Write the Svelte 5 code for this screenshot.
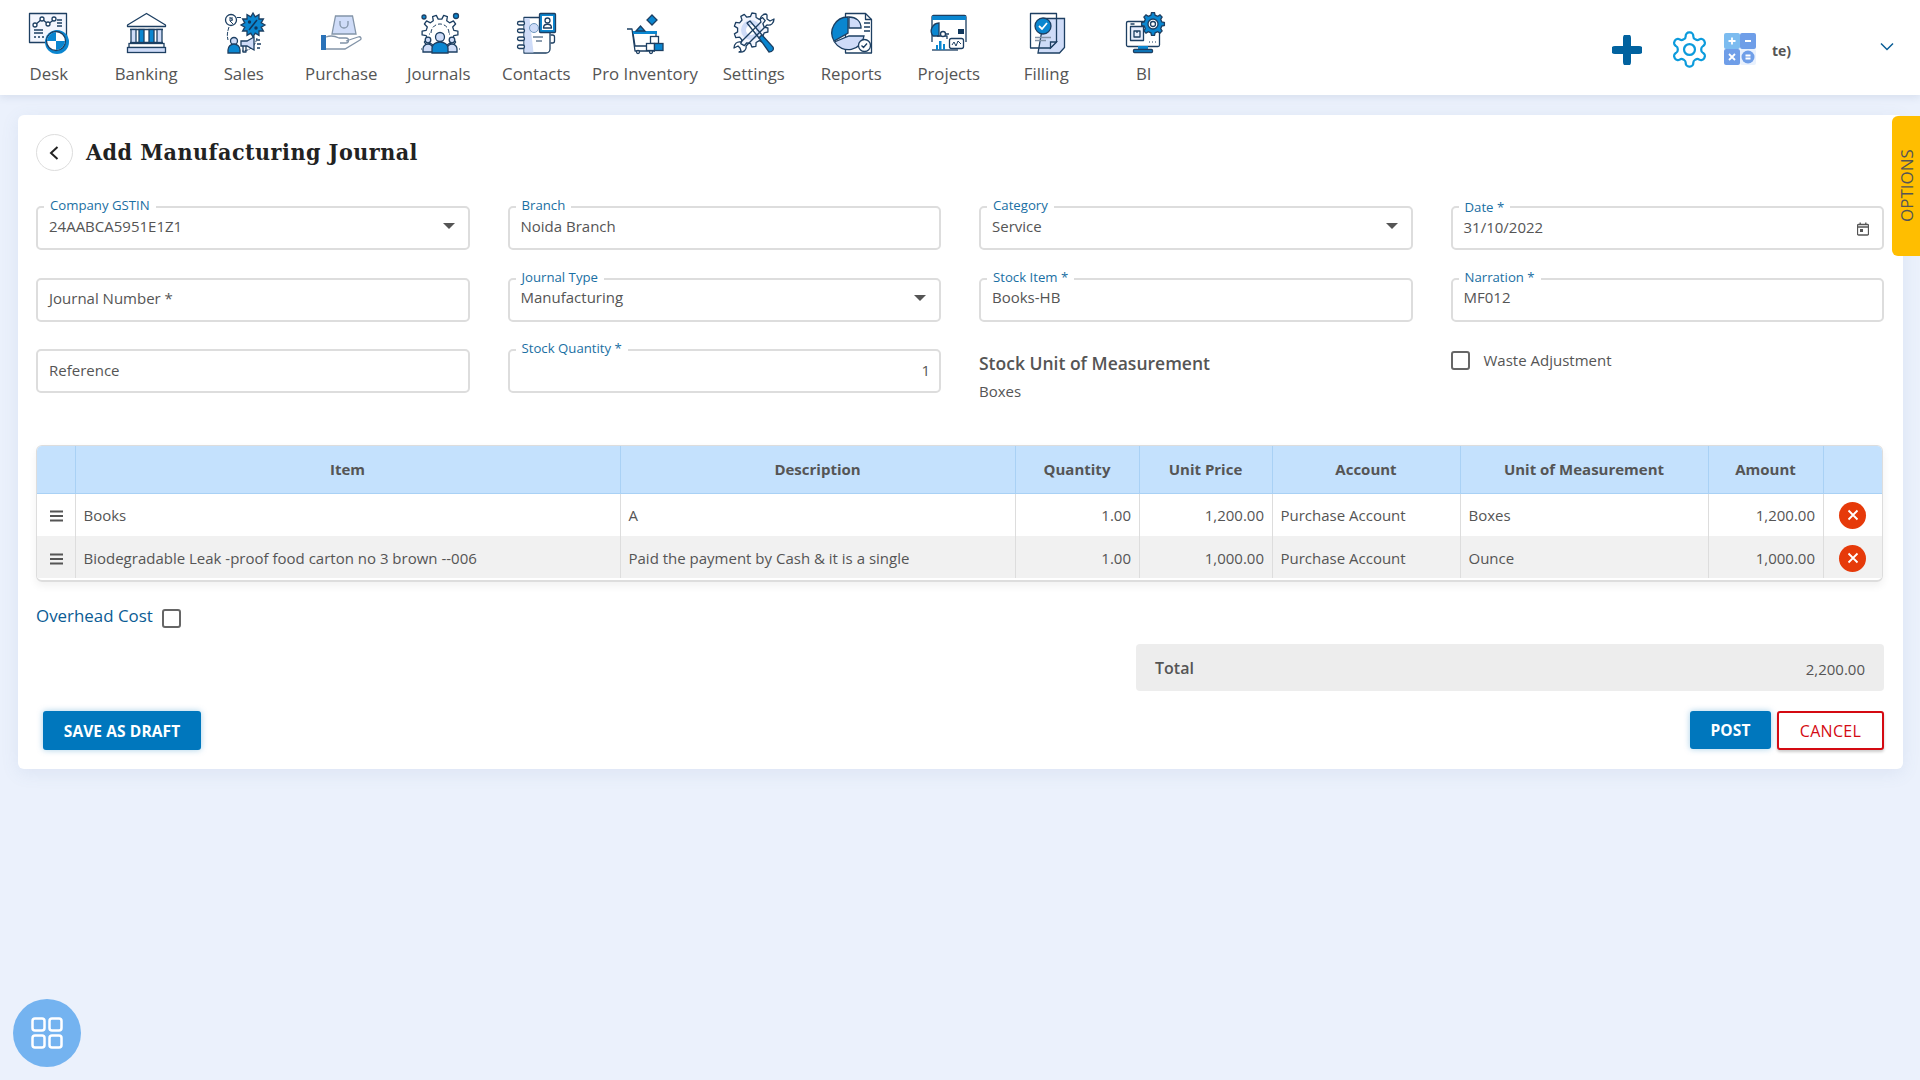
<script>
	const navItems = [
		{ key: 'desk', label: 'Desk' },
		{ key: 'banking', label: 'Banking' },
		{ key: 'sales', label: 'Sales' },
		{ key: 'purchase', label: 'Purchase' },
		{ key: 'journals', label: 'Journals' },
		{ key: 'contacts', label: 'Contacts' },
		{ key: 'inventory', label: 'Pro Inventory', wide: true },
		{ key: 'settings', label: 'Settings' },
		{ key: 'reports', label: 'Reports' },
		{ key: 'projects', label: 'Projects' },
		{ key: 'filling', label: 'Filling' },
		{ key: 'bi', label: 'BI' }
	];

	const columns = [
		{ label: '', width: 38 },
		{ label: 'Item', width: 545 },
		{ label: 'Description', width: 395 },
		{ label: 'Quantity', width: 124 },
		{ label: 'Unit Price', width: 133 },
		{ label: 'Account', width: 188 },
		{ label: 'Unit of Measurement', width: 248 },
		{ label: 'Amount', width: 115 },
		{ label: '', width: 59 }
	];

	const rows = [
		{ item: 'Books', desc: 'A', qty: '1.00', price: '1,200.00', account: 'Purchase Account', unit: 'Boxes', amount: '1,200.00' },
		{ item: 'Biodegradable Leak -proof food carton no 3 brown --006', desc: 'Paid the payment by Cash & it is a single', qty: '1.00', price: '1,000.00', account: 'Purchase Account', unit: 'Ounce', amount: '1,000.00' }
	];

	// outline of a cog with square-ish teeth
	function gear(cx, cy, outer, inner, teeth) {
		const pts = [];
		const step = (Math.PI * 2) / teeth;
		for (let i = 0; i < teeth; i++) {
			const a = i * step;
			[[-0.3, inner], [-0.17, outer], [0.17, outer], [0.3, inner]].forEach(([t, r]) => {
				pts.push(`${(cx + r * Math.cos(a + t * step)).toFixed(1)},${(cy + r * Math.sin(a + t * step)).toFixed(1)}`);
			});
		}
		return pts.join(' ');
	}

	function burst(cx, cy, outer, inner, spikes) {
		const pts = [];
		for (let i = 0; i < spikes * 2; i++) {
			const r = i % 2 ? inner : outer;
			const a = (i * Math.PI) / spikes;
			pts.push(`${(cx + r * Math.cos(a)).toFixed(1)},${(cy + r * Math.sin(a)).toFixed(1)}`);
		}
		return pts.join(' ');
	}
</script>

{#snippet field(label, value, opts = {})}
	<div class="field" class:date={opts.date}>
		{#if label}<span class="float-label">{label}</span>{/if}
		<span class="value" class:placeholder={opts.placeholder} class:right={opts.right}>{value}</span>
		{#if opts.select}<span class="caret"></span>{/if}
		{#if opts.date}
			<svg class="cal" viewBox="0 0 12 14" width="12" height="14">
				<path d="M1.5 2.5h9a1 1 0 0 1 1 1v8.5a1 1 0 0 1-1 1h-9a1 1 0 0 1-1-1V3.500a1 1 0 0 1 1-1z" fill="none" stroke="#555" stroke-width="1.300" />
				<path d="M3.200 .6v2.500M8.800 .6v2.500M.8 5h10.400" stroke="#555" stroke-width="1.300" />
				<rect x="3" y="7" width="3" height="3" fill="#555" />
			</svg>
		{/if}
	</div>
{/snippet}

{#snippet navIcon(key)}
	<svg class="nav-icon" viewBox="0 0 48 48" width="48" height="48">
		{#if key === 'desk'}
			<rect class="ln" x="4.500" y="4.500" width="37" height="29" fill="#f3f6fe" />
			<polyline class="ln" points="10,16 17,10 23,15 30,10" />
			<circle class="ln w" cx="10" cy="16" r="2" /><circle class="ln w" cx="17" cy="10" r="2" /><circle class="ln w" cx="23" cy="15" r="2" /><circle class="ln w" cx="29" cy="10" r="2" />
			<path class="ln" d="M32 11h5M32 14h5M32 17h5M9 21h9M9 24h9M9 28h2M13 28h2M17 28h2" />
			<circle class="bl" cx="32" cy="33" r="12" />
			<circle class="ln w" cx="31" cy="32" r="9.500" />
			<path class="bl" d="M31 32V23a9 9 0 0 0-9 9zM31 32v9a9 9 0 0 0 9-9z" />
		{:else if key === 'banking'}
			<path class="ln" d="M24.500 4.500 5.500 16v1.500h38V16z" fill="#f3f6fe" />
			<path class="ln" d="M8 20.500h33M8 33.500h33" />
			<rect class="lt ln" x="9" y="20.500" width="5" height="13" />
			<rect class="bl ln" x="17" y="20.500" width="5" height="13" />
			<rect class="bl ln" x="27" y="20.500" width="5" height="13" />
			<rect class="lt ln" x="35" y="20.500" width="5" height="13" />
			<rect class="ln w" x="7" y="34.500" width="35" height="4" />
			<rect class="lt ln" x="5.500" y="38.500" width="38" height="5" />
		{:else if key === 'sales'}
			<path class="ln thin" d="M17 8.500h5M9 18c-2 6-2 9-1 13M37 29c-2 9-8 13-15 13" stroke-dasharray="4 1" />
			<circle class="ln w" cx="11" cy="11" r="5.500" />
			<path class="ln thin" d="M9 9h4M9 11h4M10 9c3 0 3 3 0 3l3 3" />
			<polygon class="bl ln" points={burst(33, 16, 12, 8.500, 12)} />
			<path d="M29 21l8-10" stroke="#10375c" stroke-width="1.500" />
			<circle cx="29.500" cy="13" r="1.700" fill="#10375c" /><circle cx="36" cy="19" r="1.700" fill="#10375c" />
			<circle class="lt ln" cx="14" cy="32" r="3.500" />
			<path class="bl ln" d="M8 44v-3a6 6 0 0 1 12 0v3z" />
			<path class="lt ln" d="M21 32h6l7-4v13l-7-4h-6z" />
			<path class="ln" d="M23 37v6h3v-6M37 31h3M37 35h4M37 39h3" />
		{:else if key === 'purchase'}
			<path class="lt gr" d="M18.500 7h17l3.500 18H15z" />
			<path class="gr" fill="none" d="M23 12v3a4 4 0 0 0 8 0v-3" stroke-width="2" />
			<rect x="4" y="26" width="5" height="15" fill="#2a72b8" />
			<path class="gr" fill="none" d="M9 28c5-2 9-1 13 1h7a2.500 2.500 0 0 1 0 5h-6M29 32l12-4c3-1 4 2 2 3L28 40H9" />
		{:else if key === 'journals'}
			<polygon class="ln" fill="none" points={gear(25, 24, 18, 14, 10)} />
			<path class="ln thin" d="M16 24a9 9 0 0 1 18 0" stroke-dasharray="4 2" />
			<circle class="bl ln" cx="9" cy="8" r="2" /><circle class="bl ln" cx="41" cy="7" r="2.500" />
			<circle class="lt ln" cx="13" cy="31" r="2.800" /><circle class="lt ln" cx="37" cy="31" r="2.800" />
			<path class="lt ln" d="M8 43v-3a5 5 0 0 1 10 0v3zM32 43v-3a5 5 0 0 1 10 0v3z" />
			<circle class="lt ln" cx="25" cy="28" r="4.500" />
			<path class="bl ln" d="M17 44v-5a8 6 0 0 1 16 0v5z" />
			<path class="ln thin" d="M6 40h1M44 40h1M14 25h1M34 25h1" />
		{:else if key === 'contacts'}
			<path class="ln" fill="#f3f6fe" d="M12 8.500h22a4 4 0 0 1 4 4V40a4 4 0 0 1-4 4H12z" />
			<path class="lt" d="M12.500 9h5l4 34.500h-9z" />
			<path class="ln" d="M38.500 26h2a2 2 0 0 1 2 2v4a2 2 0 0 1-2 2h-2" />
			<rect class="bl ln" x="27.500" y="4.500" width="16" height="19" rx="1" />
			<rect class="w" x="30" y="7" width="11" height="14" />
			<circle class="ln" cx="35.500" cy="11.500" r="2.500" fill="#fff" />
			<path class="ln" d="M31.500 19c0-5 8-5 8 0z" fill="#d8e3fa" />
			<circle class="lt" cx="22" cy="19" r="4.500" stroke="#6f97bd" stroke-width="1" />
			<path class="ln thin" d="M21 28h10M24 32h6" />
			<rect class="ln w" x="5.500" y="12.500" width="7" height="3.500" rx="1.700" /><rect class="ln w" x="5.500" y="20" width="7" height="3.500" rx="1.700" /><rect class="ln w" x="5.500" y="28" width="7" height="3.500" rx="1.700" /><rect class="ln w" x="5.500" y="36" width="7" height="3.500" rx="1.700" />
		{:else if key === 'inventory'}
			<path class="ln" fill="none" d="M6 20h5l3 22h20" />
			<path class="ln" fill="#e6edfc" d="M12 24h23v13H14z" />
			<rect class="bl" x="12" y="22" width="24" height="3" />
			<path class="bl ln" d="M15 22l4.500-5 4.500 5z" />
			<path class="bl ln" d="M31 6l5 5-5 5-5-5z" />
			<circle class="ln w" cx="17" cy="43" r="1.500" /><circle class="ln w" cx="30" cy="43" r="1.500" />
			<rect class="ln w" x="29.500" y="27.500" width="8" height="7" />
			<rect class="ln w" x="25.500" y="34.500" width="8" height="7" />
			<rect class="bl ln" x="33.500" y="34.500" width="8.500" height="7" />
		{:else if key === 'settings'}
			<polygon class="ln" fill="#f3f6fe" points={gear(21, 21, 17, 13.500, 9)} />
			<circle class="lt" cx="21" cy="21" r="10" />
			<circle class="w" cx="21" cy="21" r="5" />
			<path class="ln" fill="#fff" d="M36 5c-4 0-7 4-5 8L11 33c-4-1-7 2-7 6l4-2 2 2 1 3-2 1c4 1 8-2 7-6l21-21c4 1 7-2 7-6l-4 2-3-2v-4z" />
			<path class="ln" fill="#fff" d="M17 14l3-2 12 14-3 3z" />
			<path class="bl ln" d="M29 29l3-3 11 12c1 2 0 5-4 5z" />
		{:else if key === 'reports'}
			<path class="ln" fill="#f3f6fe" d="M18.500 4.500h20l6 6v33.500h-26z" />
			<path class="ln" d="M38.500 4.500v6h6" />
			<path class="lt ln" d="M22 8c7 0 12 4 12 11H22z" />
			<path class="bl ln" d="M21 8a16 16 0 0 0-14 24l14-8z" />
			<path class="lt ln" d="M7.500 33A16 16 0 0 0 37 27H22z" />
			<path class="ln" stroke-width="1.800" d="M37 14h6M37 18h6M37 22h6" />
			<circle class="ln w" cx="37.500" cy="36.500" r="6" />
			<path class="ln" d="M34.500 36.500l2 2 3.500-4" />
		{:else if key === 'projects'}
			<path class="ln" stroke="#5f7d9b" fill="none" d="M7 33V8a1.500 1.500 0 0 1 1.500-1.500h31A1.500 1.500 0 0 1 41 8v25" />
			<rect class="bl" x="7" y="7" width="34" height="4" />
			<path class="bl ln" d="M14 14a8 8 0 0 0-6 13h6z" />
			<path class="ln" d="M12 27h10v3M19 25h5" />
			<circle class="ln w" cx="18" cy="25" r="2.500" />
			<rect x="33" y="20" width="6" height="5" fill="#10375c" />
			<path class="ln" d="M7 41h26" />
			<rect class="bl" x="11" y="36" width="2" height="5" /><rect class="bl" x="14" y="32" width="2.500" height="9" /><rect class="bl" x="18" y="35" width="2" height="6" />
			<rect class="ln w" stroke="#5f7d9b" x="24.500" y="29.500" width="14" height="10" rx="2" />
			<polyline class="ln thin" points="27,36 29,33 31,37 33,32 36,35" />
		{:else if key === 'filling'}
			<path class="lt ln" d="M22 9.500h20.500v29l-5 5.500H16z" />
			<path class="ln" fill="#fff" d="M8.500 4.500h26V33l-6 6h-20z" />
			<path class="lt ln" d="M34.500 33h-6v6z" />
			<circle class="bl ln" cx="21" cy="17" r="8" />
			<path d="M17 17l3 3 5-6" fill="none" stroke="#fff" stroke-width="1.800" />
			<path class="gr" stroke-width="1.500" d="M13 28.500h16M13 31.500h11" />
		{:else if key === 'bi'}
			<rect class="ln w" x="6.500" y="12.500" width="33" height="25" rx="1.500" />
			<rect class="ln" fill="#e6edfc" x="10.500" y="17.500" width="13" height="14" />
			<path class="ln" d="M10.500 15h4M14 22h6v6h-6zM17 22v2" />
			<path class="ln thin" d="M29 33h1M32 33h1M35 33h1" />
			<rect class="bl" x="18" y="37" width="10" height="4" />
			<rect class="bl ln" x="13.500" y="40.500" width="19" height="3" rx="1" />
			<polygon class="bl ln" points={gear(33, 15, 11.500, 9, 8)} />
			<circle class="ln w" cx="33" cy="15" r="5" />
			<circle class="ln w" cx="33" cy="15" r="2.500" />
		{/if}
	</svg>
{/snippet}

<div class="page">
	<header class="topbar">
		<nav class="nav">
			{#each navItems as n}
				<div class="nav-item" class:wide={n.wide}>
					{@render navIcon(n.key)}
					<span class="nav-label">{n.label}</span>
				</div>
			{/each}
		</nav>
		<div class="tools">
			<svg class="plus" viewBox="0 0 30 30" width="30" height="30">
				<path d="M15 3v24M3 15h24" stroke="#01629f" stroke-width="8" stroke-linecap="round" />
			</svg>
			<svg class="cog" viewBox="0 0 24 24" width="41" height="41" fill="none" stroke="#0c9bdc" stroke-width="1.300">
				<path d="M12.220 2h-.44a2 2 0 0 0-2 2v.18a2 2 0 0 1-1 1.730l-.43.25a2 2 0 0 1-2 0l-.15-.08a2 2 0 0 0-2.730.73l-.22.38a2 2 0 0 0 .73 2.730l.15.1a2 2 0 0 1 1 1.720v.51a2 2 0 0 1-1 1.740l-.15.09a2 2 0 0 0-.73 2.730l.22.38a2 2 0 0 0 2.730.73l.15-.08a2 2 0 0 1 2 0l.43.25a2 2 0 0 1 1 1.730V20a2 2 0 0 0 2 2h.44a2 2 0 0 0 2-2v-.18a2 2 0 0 1 1-1.730l.43-.25a2 2 0 0 1 2 0l.15.08a2 2 0 0 0 2.730-.73l.22-.39a2 2 0 0 0-.73-2.730l-.15-.08a2 2 0 0 1-1-1.740v-.5a2 2 0 0 1 1-1.740l.15-.09a2 2 0 0 0 .73-2.730l-.22-.38a2 2 0 0 0-2.730-.73l-.15.08a2 2 0 0 1-2 0l-.43-.25a2 2 0 0 1-1-1.730V4a2 2 0 0 0-2-2z" />
				<circle cx="12" cy="12" r="3.200" />
			</svg>
			<svg class="calc" viewBox="0 0 32 32" width="32" height="32">
				<rect x="0" y="0" width="16" height="16" rx="2" fill="#7cbcf0" />
				<rect x="16" y="0" width="16" height="16" rx="2" fill="#6f9ee8" />
				<rect x="0" y="16" width="16" height="16" rx="2" fill="#6f9ee8" />
				<rect x="16" y="16" width="16" height="16" rx="2" fill="#e9f1fd" />
				<circle cx="24" cy="24" r="6.500" fill="#6f9ee8" />
				<path d="M8 4.500v7M4.500 8h7M21 8h6M5 21l6 6M11 21l-6 6M21.500 22.500h5M21.500 25.500h5" stroke="#fff" stroke-width="1.800" />
			</svg>
			<span class="user">te)</span>
			<svg class="chev" viewBox="0 0 14 9" width="14" height="9">
				<path d="M1 1.500l6 6 6-6" fill="none" stroke="#0a5d96" stroke-width="1.500" />
			</svg>
		</div>
	</header>

	<main class="main">
		<section class="card">
			<div class="title-row">
				<div class="back">
					<svg viewBox="0 0 12 16" width="12" height="16"><path d="M9.500 2 3 8l6.500 6" fill="none" stroke="#222" stroke-width="2" /></svg>
				</div>
				<h1>Add Manufacturing Journal</h1>
			</div>

			<div class="form">
				{@render field('Company GSTIN', '24AABCA5951E1Z1', { select: true })}
				{@render field('Branch', 'Noida Branch')}
				{@render field('Category', 'Service', { select: true })}
				{@render field('Date *', '31/10/2022', { date: true })}
				{@render field('', 'Journal Number *', { placeholder: true })}
				{@render field('Journal Type', 'Manufacturing', { select: true })}
				{@render field('Stock Item *', 'Books-HB')}
				{@render field('Narration *', 'MF012')}
				{@render field('', 'Reference', { placeholder: true })}
				{@render field('Stock Quantity *', '1', { right: true })}
				<div class="uom">
					<div class="uom-title">Stock Unit of Measurement</div>
					<div class="uom-value">Boxes</div>
				</div>
				<div class="waste">
					<span class="check"></span>
					<span>Waste Adjustment</span>
				</div>
			</div>

			<div class="table-wrap">
				<table>
					<colgroup>
						{#each columns as c}<col style="width:{c.width}px" />{/each}
					</colgroup>
					<thead>
						<tr>
							{#each columns as c}<th>{c.label}</th>{/each}
						</tr>
					</thead>
					<tbody>
						{#each rows as r}
							<tr>
								<td class="handle">
									<svg viewBox="0 0 13 12" width="13" height="12"><path d="M0 1.500h13M0 6h13M0 10.500h13" stroke="#555" stroke-width="2" /></svg>
								</td>
								<td>{r.item}</td>
								<td>{r.desc}</td>
								<td class="num">{r.qty}</td>
								<td class="num">{r.price}</td>
								<td>{r.account}</td>
								<td>{r.unit}</td>
								<td class="num">{r.amount}</td>
								<td class="del-cell">
									<span class="del">
										<svg viewBox="0 0 12 12" width="12" height="12"><path d="M1.500 1.500l9 9M10.500 1.500l-9 9" stroke="#fff" stroke-width="1.800" /></svg>
									</span>
								</td>
							</tr>
						{/each}
					</tbody>
				</table>
			</div>

			<div class="overhead">
				<span>Overhead Cost</span>
				<span class="check"></span>
			</div>

			<div class="total">
				<span class="total-label">Total</span>
				<span class="total-value">2,200.00</span>
			</div>

			<div class="actions">
				<button class="btn primary draft">SAVE AS DRAFT</button>
				<div class="actions-right">
					<button class="btn primary post">POST</button>
					<button class="btn cancel">CANCEL</button>
				</div>
			</div>
		</section>
	</main>

	<div class="options">OPTIONS</div>

	<div class="fab">
		<svg viewBox="0 0 32 32" width="32" height="32" fill="none" stroke="#fff" stroke-width="2.500">
			<rect x="1.500" y="1.500" width="12" height="12" rx="2.500" />
			<rect x="18.500" y="1.500" width="12" height="12" rx="2.500" />
			<rect x="1.500" y="18.500" width="12" height="12" rx="2.500" />
			<rect x="18.500" y="18.500" width="12" height="12" rx="2.500" />
		</svg>
	</div>
</div>

<style>
	:global(body) {
		margin: 0;
		background: #ebf1fc;
		font-family: "Open Sans", "Noto Sans", sans-serif;
		color: #555;
	}
	.page {
		min-height: 1080px;
		position: relative;
		overflow: hidden;
	}

	.topbar {
		height: 95px;
		background: #fff;
		display: flex;
		justify-content: space-between;
		box-shadow: 0 2px 8px rgba(60, 80, 120, 0.12);
	}
	.nav {
		display: flex;
	}
	.nav-item {
		width: 97.5px;
		display: flex;
		flex-direction: column;
		align-items: center;
		padding-top: 9px;
	}
	.nav-item.wide {
		width: 120px;
	}
	.nav-label {
		font-size: 16.800px;
		font-weight: 500;
		line-height: 22px;
		margin-top: 6px;
		white-space: nowrap;
		color: #555;
	}
	.nav-icon .ln {
		stroke: #1d3f62;
		stroke-width: 1.300;
	}
	.nav-icon .thin {
		stroke-width: 1;
		fill: none;
	}
	.nav-icon .ln:not(.lt):not(.bl):not(.w) {
		stroke-linejoin: round;
	}
	.nav-icon .gr {
		stroke: #8394a8;
		stroke-width: 1.300;
	}
	.nav-icon .lt {
		fill: #cfdcf8;
	}
	.nav-icon .bl {
		fill: #0a86d0;
	}
	.nav-icon .w {
		fill: #fff;
	}
	polyline.ln,
	path.ln {
		fill: none;
	}
	path.ln.bl {
		fill: #0a86d0;
	}
	path.ln.lt {
		fill: #cfdcf8;
	}

	.tools {
		display: flex;
		align-items: center;
		padding-right: 26px;
	}
	.plus {
		margin-right: 26.500px;
		margin-top: 4px;
	}
	.cog {
		margin-right: 14.500px;
		margin-top: 3px;
	}
	.calc {
		margin-right: 16px;
		margin-top: 2px;
	}
	.user {
		font-size: 14px;
		font-weight: 700;
		width: 108px;
		margin-top: 6px;
	}
	.chev {
		margin-top: -3px;
	}

	.main {
		padding: 20px 17px 0 18px;
	}
	.card {
		background: #fff;
		border-radius: 6px;
		padding: 19px 19px 19px 18px;
		box-shadow: 0 4px 18px rgba(90, 120, 170, 0.1);
	}
	.title-row {
		display: flex;
		align-items: center;
		gap: 13px;
		margin-bottom: 35px;
	}
	.back {
		width: 37px;
		height: 37px;
		box-sizing: border-box;
		border: 1px solid #ddd;
		border-radius: 50%;
		display: flex;
		align-items: center;
		justify-content: center;
		padding-right: 2px;
	}
	h1 {
		margin: -2px 0 0;
		font-family: "DejaVu Serif Condensed", "DejaVu Serif", serif;
		font-size: 23px;
		font-weight: 700;
		color: #222;
		letter-spacing: 0.500px;
	}

	.form {
		display: grid;
		grid-template-columns: repeat(4, 433.500px);
		column-gap: 38px;
		grid-auto-rows: 44px;
		row-gap: 27.500px;
	}
	.field {
		position: relative;
		box-sizing: border-box;
		border: 2px solid #ddd;
		border-radius: 5px;
		display: flex;
		align-items: center;
		padding: 0 11px;
		height: 44px;
		font-size: 15px;
		color: #555;
	}
	.float-label {
		position: absolute;
		left: 6px;
		top: -11px;
		padding: 0 6px;
		background: #fff;
		font-size: 13.200px;
		line-height: 16px;
		color: #1a6fa3;
		white-space: nowrap;
	}
	.value {
		flex: 1;
		margin-top: -5px;
	}
	.value.placeholder {
		margin-top: -3px;
	}
	.value.right {
		text-align: right;
		margin-top: -3px;
		margin-right: -2px;
	}
	.date .float-label {
		top: -9px;
	}
	.date .value {
		margin-top: -1.500px;
	}
	.caret {
		width: 0;
		height: 0;
		border-left: 6px solid transparent;
		border-right: 6px solid transparent;
		border-top: 6px solid #555;
		margin-right: 2px;
		margin-top: -4px;
	}
	.cal {
		margin-right: 2px;
		margin-top: 2px;
	}
	.uom-title {
		font-size: 17.500px;
		font-weight: 600;
		line-height: 24px;
		padding-top: 2px;
	}
	.uom-value {
		font-size: 15px;
		line-height: 20px;
		margin-top: 6px;
	}
	.waste {
		display: flex;
		align-items: center;
		gap: 14px;
		font-size: 15px;
		height: 20px;
		padding-top: 1px;
	}
	.check {
		display: inline-block;
		box-sizing: border-box;
		width: 19px;
		height: 19px;
		border: 2px solid #666;
		border-radius: 3px;
		background: #fff;
		flex: none;
	}

	.table-wrap {
		margin-top: 52px;
		border: 1px solid #ddd;
		border-bottom-width: 2px;
		border-radius: 6px;
		overflow: hidden;
		box-shadow: 0 4px 8px rgba(0, 0, 0, 0.06);
		padding-bottom: 2px;
		width: 1847px;
		box-sizing: border-box;
	}
	table {
		border-collapse: collapse;
		table-layout: fixed;
		width: 1845px;
		font-size: 15px;
	}
	th {
		box-sizing: border-box;
		height: 47px;
		padding: 0 0 1px;
		background: #c4e1fd;
		border-left: 1px solid #a9d1f5;
		border-bottom: 1px solid #a9d1f5;
		font-weight: 700;
		font-size: 15px;
		color: #555;
	}
	th:first-child,
	td:first-child {
		border-left: 0;
	}
	td {
		box-sizing: border-box;
		height: 42px;
		padding: 0 7.500px 0 8px;
		border-left: 1px solid #ddd;
		color: #555;
		white-space: nowrap;
	}
	tbody tr:first-child td {
		height: 43px;
	}
	tbody tr:nth-child(2) td {
		background: #f1f1f1;
		padding-top: 1px;
	}
	td.num {
		text-align: right;
	}
	td.handle {
		padding: 2px 0 0 1px;
		text-align: center;
	}
	tbody tr:nth-child(2) td.handle {
		padding-top: 3px;
	}
	td.del-cell {
		padding: 0;
		text-align: center;
	}
	.del {
		display: inline-flex;
		align-items: center;
		justify-content: center;
		width: 27px;
		height: 27px;
		border-radius: 50%;
		background: #e63a0a;
		vertical-align: middle;
		margin-top: 1px;
	}

	.overhead {
		display: flex;
		align-items: center;
		gap: 9px;
		margin-top: 21px;
		height: 24px;
		font-size: 16.900px;
		font-weight: 500;
		color: #0b5c94;
	}
	.overhead .check {
		margin-top: 6px;
	}
	.total {
		margin: 17px 0 0 1100px;
		width: 748px;
		height: 47px;
		box-sizing: border-box;
		background: #ededed;
		border-radius: 4px;
		display: flex;
		justify-content: space-between;
		align-items: center;
		padding: 0 19px;
		font-size: 15px;
	}
	.total-label {
		font-size: 16px;
		font-weight: 600;
		margin-top: 0;
	}
	.total-value {
		font-weight: 500;
		margin-top: 2px;
	}

	.actions {
		margin-top: 20px;
		display: flex;
		justify-content: space-between;
		padding-left: 7px;
		width: 1848px;
		box-sizing: border-box;
	}
	.actions-right {
		display: flex;
		gap: 6px;
	}
	.btn {
		font-family: inherit;
		font-size: 15.500px;
		font-weight: 700;
		letter-spacing: 0.100px;
		border-radius: 3px;
		height: 39px;
		padding: 0;
		cursor: pointer;
	}
	.primary {
		background: #0077bd;
		color: #fff;
		border: 0;
		box-shadow: 0 0 6px rgba(0, 119, 189, 0.35);
	}
	.draft {
		width: 158px;
	}
	.post {
		width: 81px;
		height: 38px;
	}
	.cancel {
		width: 107px;
		background: #fff;
		color: #d40a12;
		border: 2px solid #d40a12;
		font-size: 16px;
		font-weight: 500;
		letter-spacing: 0.300px;
		box-shadow: 0 2px 3px rgba(0, 0, 0, 0.2);
	}

	.options {
		position: absolute;
		top: 116px;
		right: 0;
		width: 28px;
		height: 140px;
		box-sizing: border-box;
		background: #ffbe00;
		writing-mode: vertical-rl;
		transform: rotate(180deg);
		border-radius: 0 6px 6px 0;
		display: flex;
		align-items: center;
		justify-content: center;
		font-size: 17px;
		color: #555;
	}
	.fab {
		position: fixed;
		left: 13px;
		top: 999px;
		width: 68px;
		height: 68px;
		border-radius: 50%;
		background: #74b3f0;
		display: flex;
		align-items: center;
		justify-content: center;
	}
</style>
